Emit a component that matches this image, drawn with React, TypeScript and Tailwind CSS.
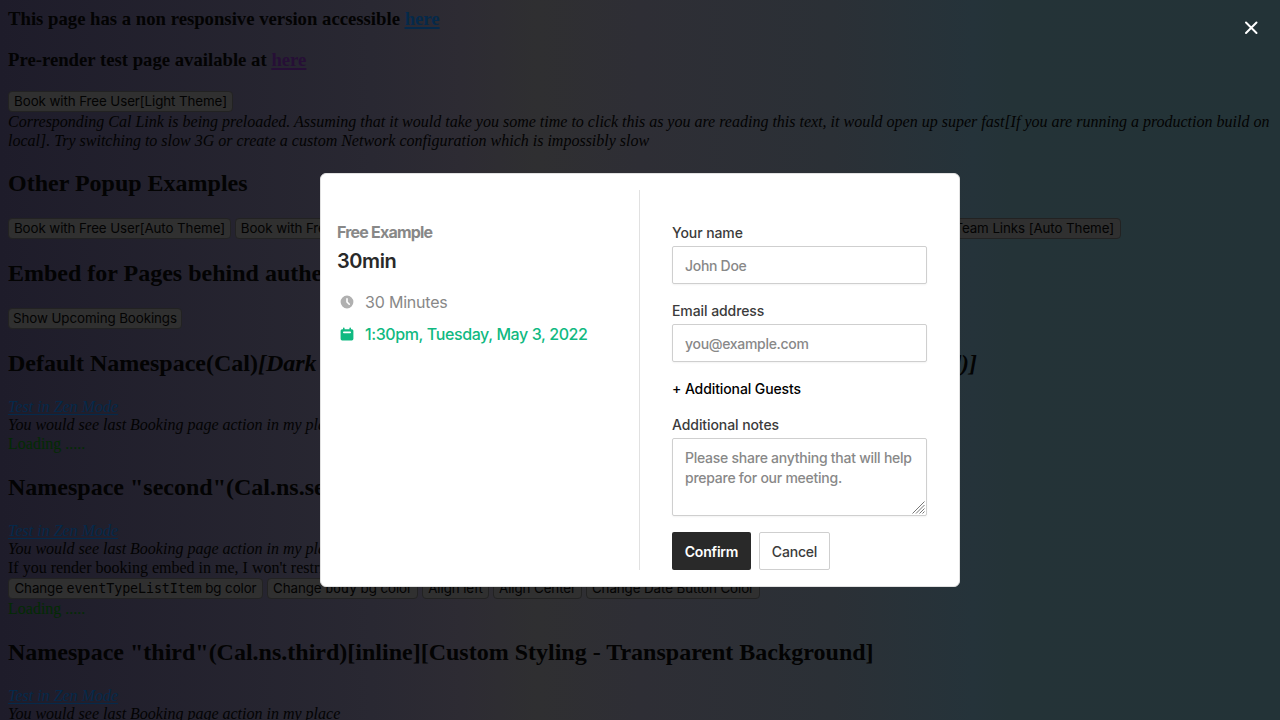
import type { ReactNode } from "react";

function Heading({ children, className = "" }: { children: ReactNode; className?: string }) {
  return <h2 className={`h-7 text-[24px] leading-7 font-bold whitespace-nowrap ${className}`}>{children}</h2>;
}

function NativeButton({ children, className = "" }: { children: ReactNode; className?: string }) {
  return (
    <button
      className={`h-[21px] shrink-0 rounded-[4px] border border-[#222222] bg-[#303030] text-center font-['Inter',sans-serif] text-[13.333px] leading-[19px] tracking-[-0.08px] whitespace-nowrap text-[#030303] ${className}`}
    >
      {children}
    </button>
  );
}

function ZenLink() {
  return (
    <a className="block h-[18px] w-fit text-[#05294a] italic underline decoration-1 underline-offset-2">
      Test in Zen Mode
    </a>
  );
}

function Field({ label, placeholder }: { label: string; placeholder: string }) {
  return (
    <div className="mb-4 h-[62px]">
      <label className="mb-1 block h-5 pt-px text-sm leading-5 tracking-[-0.08px] text-[#3b3b3b]">{label}</label>
      <input
        placeholder={placeholder}
        className="block h-[38px] w-full rounded-[2px] border border-[#cfcfcf] bg-white px-3 pt-px text-sm leading-5 tracking-[-0.3px] shadow-xs placeholder:text-[#888888]"
      />
    </div>
  );
}

function BackgroundPage() {
  return (
    <div className="h-full w-full overflow-hidden bg-[linear-gradient(90deg,#1e1c2a_0%,#292832_29%,#2d2b33_36%,#2f2f31_42%,#2e2e35_50%,#2b3036_65%,#25333a_76%,#243337_79%,#233337_100%)] px-2 text-[16px] leading-[18px] text-[#030303]">
      <h3 className="mt-[9px] h-5 text-[18.72px] leading-5 font-bold">
        This page has a non responsive version accessible{" "}
        <a className="text-[#05294a] underline decoration-2 underline-offset-2">here</a>
      </h3>
      <h3 className="mt-[21px] h-5 text-[18.72px] leading-5 font-bold">
        Pre-render test page available at{" "}
        <a className="text-[#260f36] underline decoration-2 underline-offset-2">here</a>
      </h3>
      <div className="mt-[21px] flex h-[21px]">
        <NativeButton className="w-[225px]">Book with Free User[Light Theme]</NativeButton>
      </div>
      <p className="w-[1272px] leading-[19px] italic">
        Corresponding Cal Link is being preloaded. Assuming that it would take you some time to click this as you are
        reading this text, it would open up super fast[If you are running a production build on
        <br />
        local]. Try switching to slow 3G or create a custom Network configuration which is impossibly slow
      </p>
      <Heading className="mt-[19px]">Other Popup Examples</Heading>
      <div className="mt-[21px] flex h-[21px] gap-1">
        <NativeButton className="w-[223px]">Book with Free User[Auto Theme]</NativeButton>
        <NativeButton className="w-[223px]">Book with Free User[Dark Theme]</NativeButton>
        <NativeButton className="w-[223px]">Book with Team[Light Theme]</NativeButton>
        <NativeButton className="w-[432px] pr-[6px] text-right">Book Free User and Team Links [Auto Theme]</NativeButton>
      </div>
      <Heading className="mt-5">Embed for Pages behind authentication</Heading>
      <div className="mt-[21px] flex h-[21px]">
        <NativeButton className="w-[174px]">Show Upcoming Bookings</NativeButton>
      </div>
      <Heading className="mt-5 flex w-[969px] justify-between">
        <span>
          Default Namespace(Cal)<i>[Dark Theme]</i>
        </span>
        <i>[inline](preloaded)]</i>
      </Heading>
      <div className="mt-[21px]">
        <ZenLink />
        <p className="italic">You would see last Booking page action in my place</p>
        <p className="mt-px text-[#032b03]">Loading .....</p>
      </div>
      <Heading className="mt-5">Namespace "second"(Cal.ns.second)[inline]</Heading>
      <div className="mt-[21px]">
        <ZenLink />
        <p className="italic">You would see last Booking page action in my place</p>
        <p className="mt-px">If you render booking embed in me, I won't restrict you. The entire page is yours.</p>
        <div className="mt-px flex h-[21px] gap-1">
          <NativeButton className="w-[255px]">
            Change <span className="font-['DejaVu_Sans_Mono',monospace] text-[13.333px]">eventTypeListItem</span> bg color
          </NativeButton>
          <NativeButton className="w-[151px]">
            Change <span className="font-['DejaVu_Sans_Mono',monospace] text-[13.333px]">body</span> bg color
          </NativeButton>
          <NativeButton className="w-[67px]">Align left</NativeButton>
          <NativeButton className="w-[89px]">Align Center</NativeButton>
          <NativeButton className="w-[174px]">Change Date Button Color</NativeButton>
        </div>
        <p className="mt-px text-[#032b03]">Loading .....</p>
      </div>
      <Heading className="mt-5">Namespace "third"(Cal.ns.third)[inline][Custom Styling - Transparent Background]</Heading>
      <div className="mt-[21px]">
        <ZenLink />
        <p className="italic">You would see last Booking page action in my place</p>
      </div>
    </div>
  );
}

function BookingDialog() {
  return (
    <section className="absolute top-[173px] left-[320px] flex h-[414px] w-[640px] rounded-md border border-[#e1e1e1] bg-white py-4 font-['Inter',sans-serif] font-medium">
      <div className="w-[319px] border-r border-[#e1e1e1] pt-8 pl-4">
        <h2 className="h-5 w-fit text-[16px] leading-5 font-bold tracking-[-0.8px] whitespace-nowrap text-[#888888]">
          Free Example
        </h2>
        <h1 className="mt-[5px] h-7 text-[20px] leading-7 font-semibold tracking-[-0.4px] text-[#292929]">30min</h1>
        <p className="mt-[15px] flex h-6 items-center text-[16px] leading-6 font-normal tracking-[-0.2px] text-[#888888]">
          <svg viewBox="0 0 20 20" className="mr-[10px] ml-0.5 size-4 fill-[#b0b0b0]">
            <path
              fillRule="evenodd"
              d="M10 18a8 8 0 100-16 8 8 0 000 16zm1-12a1 1 0 10-2 0v4a1 1 0 00.293.707l2.828 2.829a1 1 0 101.415-1.415L11 9.586V6z"
            />
          </svg>
          30 Minutes
        </p>
        <p className="mt-2 flex h-6 items-center text-[16px] leading-6 font-medium tracking-[-0.39px] whitespace-nowrap text-[#10b981]">
          <svg viewBox="0 0 20 20" className="mr-[10px] ml-0.5 size-4 fill-[#10b981]">
            <path
              fillRule="evenodd"
              d="M6 2a1 1 0 00-1 1v1H4a2 2 0 00-2 2v10a2 2 0 002 2h12a2 2 0 002-2V6a2 2 0 00-2-2h-1V3a1 1 0 10-2 0v1H7V3a1 1 0 00-1-1zm0 5a1 1 0 000 2h8a1 1 0 100-2H6z"
            />
          </svg>
          1:30pm, Tuesday, May 3, 2022
        </p>
      </div>
      <form className="ml-8 w-[255px] pt-8">
        <Field label="Your name" placeholder="John Doe" />
        <Field label="Email address" placeholder="you@example.com" />
        <div className="h-5 pt-px text-sm leading-5 tracking-[-0.1px] text-black">+ Additional Guests</div>
        <label className="mt-4 mb-1 block h-5 pt-px text-sm leading-5 tracking-[-0.08px] text-[#3b3b3b]">
          Additional notes
        </label>
        <div className="relative">
          <textarea
            placeholder="Please share anything that will help prepare for our meeting."
            className="block h-[78px] w-full resize-none rounded-[2px] border border-[#cfcfcf] bg-white py-[9px] pr-2 pl-3 text-sm leading-5 tracking-[-0.25px] shadow-xs placeholder:text-[#888888]"
          />
          <svg viewBox="0 0 13 13" className="absolute right-[2px] bottom-[2px] size-[13px] fill-none stroke-[#777777]">
            <path d="M0.500 12.500L12.500 0.500M4 12.500L12.500 4M7.500 12.500L12.500 7.500M10.500 12.500L12.500 10.500" />
          </svg>
        </div>
        <div className="mt-4 flex gap-2">
          <button type="button" className="h-[38px] w-[79px] rounded-[2px] bg-[#292929] pt-0.5 text-sm font-semibold tracking-[-0.2px] text-white">
            Confirm
          </button>
          <button type="button" className="h-[38px] w-[71px] rounded-[2px] border border-[#cfcfcf] bg-white pt-0.5 text-sm tracking-[-0.2px] text-[#3b3b3b]">
            Cancel
          </button>
        </div>
      </form>
    </section>
  );
}

export default function App() {
  return (
    <main className="relative flex h-[720px] w-[1280px] overflow-hidden font-['Liberation_Serif',serif]">
      <BackgroundPage />
      <BookingDialog />
      <button aria-label="Close" className="absolute top-[21px] left-[1244px]">
        <svg viewBox="0 0 14 14" className="size-[14px] stroke-white" strokeWidth="2" strokeLinecap="round">
          <path d="M2 1.500l10.500 10.500M12.500 1.500L2 12" />
        </svg>
      </button>
    </main>
  );
}
